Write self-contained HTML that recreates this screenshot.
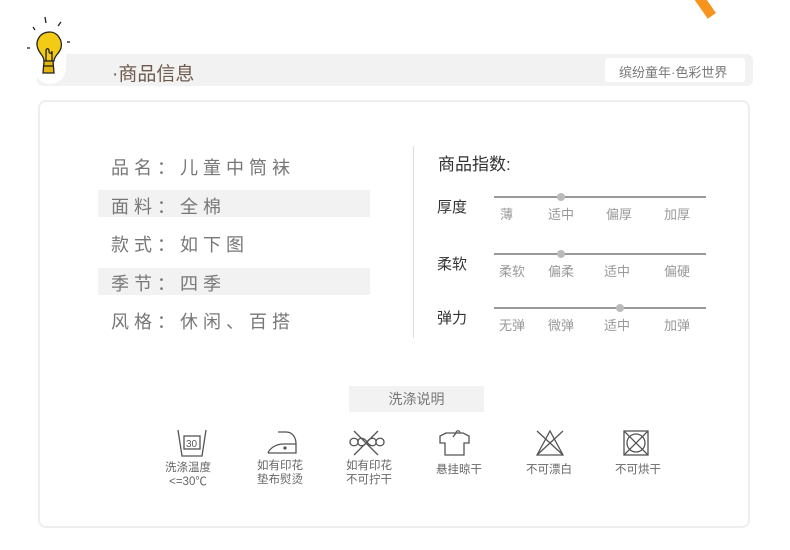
<!DOCTYPE html><html><head><meta charset="utf-8"><style>
*{margin:0;padding:0;box-sizing:border-box}
body{width:790px;height:550px;background:#fff;position:relative;overflow:hidden;font-family:"Liberation Sans","Noto Sans CJK SC",sans-serif}
.a{position:absolute}
.t{color:#777;font-size:18px;letter-spacing:5px;white-space:nowrap}
.lb{font-size:15px;color:#333}
.sm{font-size:13px;color:#999;white-space:nowrap}
.ln{height:2px;background:#999;width:212px;left:494px}
.dot{width:8px;height:8px;border-radius:50%;background:#bbb}
.ic{font-size:11.5px;color:#666;text-align:center;line-height:14px;width:80px}
</style></head><body>
<div class="a" style="left:700px;top:-6px;width:10px;height:24px;background:#f7941d;transform:rotate(-35deg)"></div>
<div class="a" style="left:37px;top:54px;width:716px;height:32px;background:#f2f2f2;border-radius:6px"></div>
<div class="a" style="left:605px;top:58px;width:140px;height:24px;background:#fff;border-radius:3px"></div>
<div class="a" style="left:619px;top:62px;font-size:13px;color:#777">缤纷童年·色彩世界</div>
<div class="a" style="left:112px;top:59px;font-size:19px;color:#6d5a4c">·商品信息</div>
<div class="a" style="left:34px;top:40px;width:32px;height:44px;background:#fff;border-radius:16px"></div>
<svg class="a" style="left:0;top:0" width="80" height="85"><g stroke="#222" stroke-width="1.3" fill="none"><line x1="45" y1="17" x2="46" y2="23"/><line x1="61" y1="22" x2="58" y2="26"/><line x1="33" y1="27" x2="35" y2="30"/><line x1="27" y1="48" x2="30" y2="48"/><line x1="67" y1="42" x2="70" y2="42"/><path d="M50 32c-11 0-15 10-12 17 2 5 6 7 6 12h10c0-5 5-7 7-13 2-8-4-16-11-16z" fill="#f4cb14"/><path d="M44 61l-1 12h11l-1-12z" fill="#e3b40d"/><path d="M46 61v-10c0-3 3-3 3 0 0 3 3 3 3 0v10"/><line x1="44" y1="66" x2="54" y2="66"/></g></svg>
<div class="a" style="left:38px;top:100px;width:712px;height:428px;border:2px solid #eee;border-radius:8px"></div>
<div class="a" style="left:98px;top:190px;width:272px;height:27px;background:#f2f2f2"></div>
<div class="a" style="left:98px;top:268px;width:272px;height:27px;background:#f2f2f2"></div>
<div class="a t" style="left:111px;top:154px">品名：儿童中筒袜</div>
<div class="a t" style="left:111px;top:193px">面料：全棉</div>
<div class="a t" style="left:111px;top:231px">款式：如下图</div>
<div class="a t" style="left:111px;top:270px">季节：四季</div>
<div class="a t" style="left:111px;top:308px">风格：休闲、百搭</div>
<div class="a" style="left:413px;top:146px;width:1px;height:192px;background:#ddd"></div>
<div class="a" style="left:438px;top:150px;font-size:17px;color:#333">商品指数:</div>
<div class="a lb" style="left:437px;top:196px">厚度</div>
<div class="a lb" style="left:437px;top:253px">柔软</div>
<div class="a lb" style="left:437px;top:307px">弹力</div>
<div class="a ln" style="top:196px"></div><div class="a dot" style="left:557px;top:193px"></div>
<div class="a ln" style="top:253px"></div><div class="a dot" style="left:557px;top:250px"></div>
<div class="a ln" style="top:307px"></div><div class="a dot" style="left:616px;top:304px"></div>
<div class="a sm" style="left:500px;top:204px">薄</div><div class="a sm" style="left:548px;top:204px">适中</div><div class="a sm" style="left:606px;top:204px">偏厚</div><div class="a sm" style="left:664px;top:204px">加厚</div>
<div class="a sm" style="left:499px;top:261px">柔软</div><div class="a sm" style="left:548px;top:261px">偏柔</div><div class="a sm" style="left:604px;top:261px">适中</div><div class="a sm" style="left:664px;top:261px">偏硬</div>
<div class="a sm" style="left:499px;top:315px">无弹</div><div class="a sm" style="left:548px;top:315px">微弹</div><div class="a sm" style="left:604px;top:315px">适中</div><div class="a sm" style="left:664px;top:315px">加弹</div>
<div class="a" style="left:349px;top:386px;width:135px;height:26px;background:#f2f2f2;font-size:14px;color:#777;text-align:center;line-height:26px">洗涤说明</div>
<svg class="a" style="left:150px;top:425px" width="520" height="35"><g stroke="#555" stroke-width="1.3" fill="none">
<path d="M28 5l4 26h20l4-26"/><rect x="34" y="11" width="16" height="13"/><text x="36" y="22" font-size="10" fill="#555" stroke="none" font-family="Liberation Sans">30</text>
<path d="M118 28h28v-9c0-6-3-12-10-12h-8M146 19h-12c-8 0-14 4-16 9"/><circle cx="135" cy="23" r="1" fill="#555"/>
<path d="M208 17c0-5 6-5 9 0s9 5 9 0-6-5-9 0-9 5-9 0zM226 17c0-5 8-5 8 0s-8 5-8 0zM208 17c0-5-8-5-8 0s8 5 8 0M204 6l24 24M228 6l-24 24"/>
<path d="M296 8l-6 3v7h5v12h19v-12h5v-7l-6-3zM303 12l3-4c0-3 4-3 4 0"/>
<path d="M387 30l13-24 13 24zM387 6l26 24M413 6l-26 24"/>
<rect x="474" y="6" width="24" height="24"/><circle cx="486" cy="18" r="9"/><path d="M474 6l24 24M498 6l-24 24"/></g></svg>
<div class="a ic" style="left:148px;top:461px">洗涤温度<br>&lt;=30℃</div>
<div class="a ic" style="left:240px;top:459px">如有印花<br>垫布熨烫</div>
<div class="a ic" style="left:329px;top:459px">如有印花<br>不可拧干</div>
<div class="a ic" style="left:419px;top:463px">悬挂晾干</div>
<div class="a ic" style="left:509px;top:463px">不可漂白</div>
<div class="a ic" style="left:598px;top:463px">不可烘干</div>
</body></html>
